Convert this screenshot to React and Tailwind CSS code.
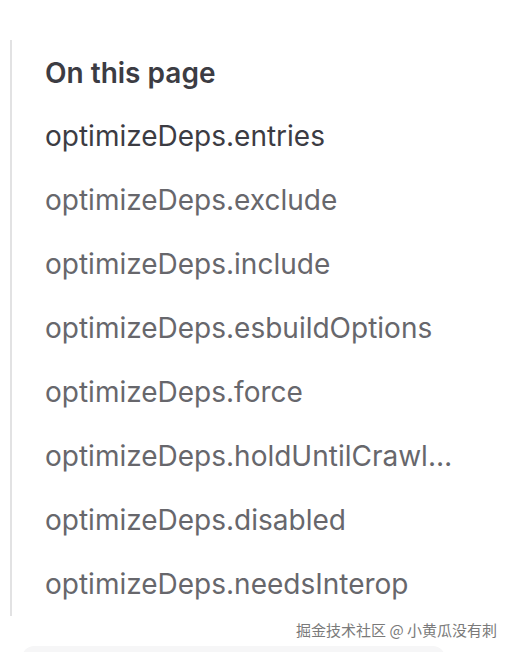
const items = [
  'optimizeDeps.entries',
  'optimizeDeps.exclude',
  'optimizeDeps.include',
  'optimizeDeps.esbuildOptions',
  'optimizeDeps.force',
  'optimizeDeps.holdUntilCrawlEnd',
  'optimizeDeps.disabled',
  'optimizeDeps.needsInterop',
];

export default function App() {
  return (
    <div className="relative h-[652px] w-[514px] overflow-hidden bg-white pt-10 font-['Inter',sans-serif]">
      <nav className="ml-[10px] h-[576px] border-l-2 border-[#e2e2e3] pl-[33px] pt-[15px]">
        <div className="text-[28px] font-semibold leading-9 text-[#3c3c43]">On this page</div>
        <ul className="mt-[13px]">
          {items.map((item, i) => (
            <li
              key={item}
              className={`w-[408px] truncate text-[28px] leading-[64px] ${
                i === 0 ? 'text-[#3c3c43]' : 'text-[#67676c]'
              }`}
            >
              {item}
            </li>
          ))}
        </ul>
      </nav>

      {/* watermark */}
      <div className="flex justify-end pr-[17px] pt-[2px]">
        <span className="text-[15px] leading-6 text-[#7a7a7a] [text-shadow:0_0_1px_#ffffff] font-['Noto_Sans_CJK_SC',sans-serif]">
          掘金技术社区 @ 小黄瓜没有刺
        </span>
      </div>

      <div className="ml-[22px] mt-[4px] h-10 w-[423px] rounded-t-xl bg-[#f6f6f7]" />
    </div>
  );
}
